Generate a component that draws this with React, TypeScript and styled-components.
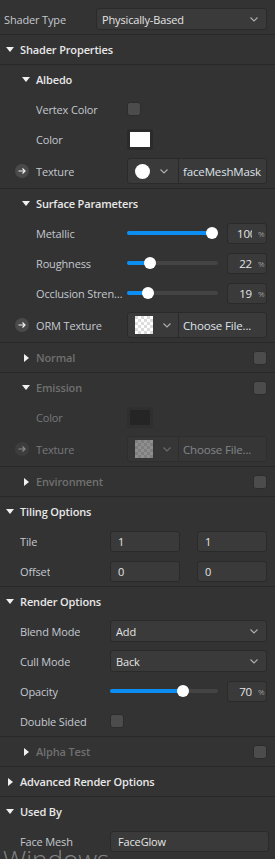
import React from 'react'
import styled, { createGlobalStyle, css } from 'styled-components'

const GlobalStyle = createGlobalStyle`
  html, body {
    margin: 0;
    padding: 0;
    background: #333333;
  }
  body {
    font-family: "Open Sans", "Noto Sans", sans-serif;
    font-size: 11px;
    letter-spacing: -0.15px;
    color: #c3c8d0;
    overflow: hidden;
  }
`

const Panel = styled.div`
  position: relative;
  display: flex;
  flex-direction: column;
  width: 275px;
  height: 859px;
  padding-top: 4px;
  box-sizing: border-box;
  overflow: hidden;
`

const Section = styled.div`
  display: flex;
  flex-direction: column;
  border-top: 1px solid #282828;
`

const Header = styled.div<{ $indent: number }>`
  display: flex;
  align-items: center;
  height: 29px;
  padding: 0 8px 0 ${(p) => p.$indent}px;
  gap: 6px;
`

const Triangle = styled.span<{ $open: boolean }>`
  width: 0;
  height: 0;
  ${(p) =>
    p.$open
      ? css`
          border-left: 4px solid transparent;
          border-right: 4px solid transparent;
          border-top: 5px solid #f0f0f0;
        `
      : css`
          margin-left: 2px;
          margin-right: 1px;
          border-top: 4px solid transparent;
          border-bottom: 4px solid transparent;
          border-left: 5px solid #f0f0f0;
        `}
`

const Title = styled.span<{ $dim?: boolean }>`
  flex: 1;
  font-weight: 600;
  color: ${(p) => (p.$dim ? '#707070' : '#e8e8e8')};
`

const Row = styled.div<{ $indent: number; $label: number; $tall?: boolean; $off?: boolean; $right?: number }>`
  display: grid;
  grid-template-columns: ${(p) => p.$label}px 1fr;
  align-items: center;
  height: ${(p) => (p.$tall ? 34 : 30)}px;
  padding: 0 ${(p) => p.$right ?? 8}px 0 ${(p) => p.$indent}px;
  opacity: ${(p) => (p.$off ? 0.45 : 1)};
`

const Label = styled.div`
  display: flex;
  align-items: center;
  min-width: 0;
  padding-right: 4px;
`

const LabelText = styled.span`
  min-width: 0;
  white-space: nowrap;
  overflow: hidden;
  text-overflow: ellipsis;
`

const LinkIcon = styled.span`
  display: inline-flex;
  flex: none;
  width: 14px;
  height: 14px;
  margin-left: -21px;
  margin-right: 7px;
`

const Box = styled.div`
  display: flex;
  align-items: center;
  height: 21px;
  box-sizing: border-box;
  background: #3a3a3a;
  border: 1px solid #2a2a2a;
  border-radius: 3px;
  color: #e4e4e4;
`

const Select = styled(Box)`
  justify-content: space-between;
  padding: 0 8px 0 5px;
  height: 22px;
`

const TextBox = styled(Box)`
  padding: 0 7px;
`

const Pair = styled.div`
  display: grid;
  grid-template-columns: 1fr 1fr;
  gap: 17px;
`

const Check = styled.span`
  display: block;
  width: 14px;
  height: 14px;
  box-sizing: border-box;
  background: #4c4c4c;
  border: 1px solid #2c2c2c;
  border-radius: 3px;
`

const Swatch = styled.span<{ $fill: string }>`
  display: block;
  width: 26px;
  height: 21px;
  box-sizing: border-box;
  padding: 3px;
  background: #2b2b2b;
  border-radius: 2px;
  &::after {
    content: '';
    display: block;
    height: 100%;
    background: ${(p) => p.$fill};
  }
`

const TexturePick = styled(Box)`
  display: grid;
  grid-template-columns: 51px 1fr;
  height: 26px;
  padding: 0;
`

const TextureThumb = styled.div`
  display: flex;
  align-items: center;
  gap: 10px;
  height: 100%;
  padding-left: 7px;
  border-right: 1px solid #2a2a2a;
`

const Dot = styled.span`
  width: 15px;
  height: 15px;
  border-radius: 50%;
  background: #ffffff;
`

const Checker = styled.span`
  width: 18px;
  height: 18px;
  background: repeating-conic-gradient(#ffffff 0 25%, #dcdcdc 0 50%) 0 0 / 6px 6px;
`

const FileName = styled.span`
  padding-left: 4px;
  white-space: nowrap;
  overflow: hidden;
  font-size: 11.5px;
  color: #dfe3ea;
`

const SliderWrap = styled.div`
  display: grid;
  grid-template-columns: 1fr 40px;
  gap: 9px;
  align-items: center;
`

const Track = styled.div`
  position: relative;
  height: 4px;
  border-radius: 2px;
  background: #444444;
`

const Fill = styled.div`
  height: 100%;
  border-radius: 2px;
  background: #0b8df2;
`

const Thumb = styled.span`
  position: absolute;
  top: 50%;
  width: 12px;
  height: 12px;
  margin: -6px 0 0 -6px;
  border-radius: 50%;
  background: #ffffff;
`

const ValueBox = styled(Box)`
  padding: 0 0 0 9px;
  gap: 6px;
`

const Num = styled.span`
  width: 15px;
  overflow: hidden;
  white-space: nowrap;
  text-align: right;
  font-size: 11.5px;
`

const Unit = styled.span`
  font-size: 8px;
  color: #9a9a9a;
`

const Watermark = styled.div`
  position: absolute;
  left: 3px;
  top: 846px;
  font-family: "Open Sans", sans-serif;
  font-size: 26px;
  font-weight: 300;
  line-height: 1;
  letter-spacing: 0;
  color: rgba(200, 200, 200, 0.55);
  pointer-events: none;
`

const Chevron = () => (
  <svg width="8" height="5" viewBox="0 0 8 5">
    <polyline points="0.5,0.5 4,4 7.5,0.5" fill="none" stroke="#b0b0b0" strokeWidth="1.1" />
  </svg>
)

const Arrow = () => (
  <LinkIcon>
    <svg width="14" height="14" viewBox="0 0 14 14">
      <circle cx="7" cy="7" r="7" fill="#4a4a4a" />
      <path d="M3.5 7h6.5M7.5 4.5 10 7l-2.5 2.5" fill="none" stroke="#f0f0f0" strokeWidth="1.2" />
    </svg>
  </LinkIcon>
)

function Head({ title, open, indent, dim, toggle }: { title: string; open: boolean; indent: number; dim?: boolean; toggle?: boolean }) {
  return (
    <Header $indent={indent}>
      <Triangle $open={open} />
      <Title $dim={dim}>{title}</Title>
      {toggle && <Check />}
    </Header>
  )
}

function Name({ text, link }: { text: string; link?: boolean }) {
  return (
    <Label>
      {link && <Arrow />}
      <LabelText>{text}</LabelText>
    </Label>
  )
}

function Slider({ value }: { value: number }) {
  const pct = Math.max(0, Math.min(100, value))
  // thumb centre stays inside the track
  const pos = `calc(6px + (100% - 12px) * ${pct / 100})`
  return (
    <SliderWrap>
      <Track>
        <Fill style={{ width: pos }} />
        <Thumb style={{ left: pos }} />
      </Track>
      <ValueBox>
        <Num>{value}</Num>
        <Unit>%</Unit>
      </ValueBox>
    </SliderWrap>
  )
}

function Texture({ file, checker }: { file: string; checker?: boolean }) {
  return (
    <TexturePick>
      <TextureThumb>
        {checker ? <Checker /> : <Dot />}
        <Chevron />
      </TextureThumb>
      <FileName>{file}</FileName>
    </TexturePick>
  )
}

// nested (level 1) rows and top level (level 0) rows
const L1 = { $indent: 36, $label: 91 }
const L0 = { $indent: 20, $label: 90 }

export default function App() {
  return (
    <>
      <GlobalStyle />
      <Panel>
        <Row $indent={4} $label={92}>
          <Name text="Shader Type" />
          <Select>
            <span>Physically-Based</span>
            <Chevron />
          </Select>
        </Row>

        <Section>
          <Head title="Shader Properties" open indent={6} />

          <Section>
            <Head title="Albedo" open indent={22} />
            <Row {...L1}>
              <Name text="Vertex Color" />
              <Check />
            </Row>
            <Row {...L1}>
              <Name text="Color" />
              <Swatch $fill="#ffffff" />
            </Row>
            <Row {...L1} $tall>
              <Name text="Texture" link />
              <Texture file="faceMeshMask" />
            </Row>
          </Section>

          <Section>
            <Head title="Surface Parameters" open indent={22} />
            <Row {...L1}>
              <Name text="Metallic" />
              <Slider value={100} />
            </Row>
            <Row {...L1}>
              <Name text="Roughness" />
              <Slider value={22} />
            </Row>
            <Row {...L1}>
              <Name text="Occlusion Strength" />
              <Slider value={19} />
            </Row>
            <Row {...L1} $tall>
              <Name text="ORM Texture" link />
              <Texture file="Choose File..." checker />
            </Row>
          </Section>

          <Section>
            <Head title="Normal" open={false} indent={22} dim toggle />
          </Section>

          <Section>
            <Head title="Emission" open indent={22} dim toggle />
            <Row {...L1} $off>
              <Name text="Color" />
              <Swatch $fill="#161616" />
            </Row>
            <Row {...L1} $tall $off>
              <Name text="Texture" link />
              <Texture file="Choose File..." checker />
            </Row>
          </Section>

          <Section>
            <Head title="Environment" open={false} indent={22} dim toggle />
          </Section>
        </Section>

        <Section>
          <Head title="Tiling Options" open indent={6} />
          <Row {...L0}>
            <Name text="Tile" />
            <Pair>
              <TextBox>1</TextBox>
              <TextBox>1</TextBox>
            </Pair>
          </Row>
          <Row {...L0}>
            <Name text="Offset" />
            <Pair>
              <TextBox>0</TextBox>
              <TextBox>0</TextBox>
            </Pair>
          </Row>
        </Section>

        <Section>
          <Head title="Render Options" open indent={6} />
          <Row {...L0}>
            <Name text="Blend Mode" />
            <Select>
              <span>Add</span>
              <Chevron />
            </Select>
          </Row>
          <Row {...L0}>
            <Name text="Cull Mode" />
            <Select>
              <span>Back</span>
              <Chevron />
            </Select>
          </Row>
          <Row {...L0}>
            <Name text="Opacity" />
            <Slider value={70} />
          </Row>
          <Row {...L0}>
            <Name text="Double Sided" />
            <Check />
          </Row>

          <Section>
            <Head title="Alpha Test" open={false} indent={22} dim toggle />
          </Section>
        </Section>

        <Section>
          <Head title="Advanced Render Options" open={false} indent={6} />
        </Section>

        <Section>
          <Head title="Used By" open indent={6} />
          <Row {...L0} $right={6}>
            <Name text="Face Mesh" />
            <TextBox>FaceGlow</TextBox>
          </Row>
        </Section>

        <Watermark>Windows</Watermark>
      </Panel>
    </>
  )
}
